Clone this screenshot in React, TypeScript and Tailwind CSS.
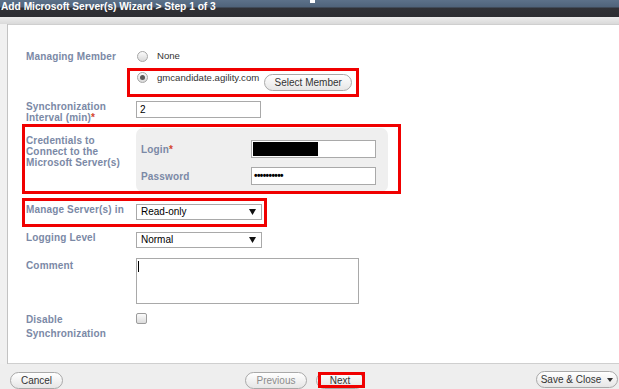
import React from 'react'

const label = "text-[10px] font-bold leading-[11px] text-[#7b89a6] tracking-[0.15px]"

function Radio({ checked }: { checked?: boolean }) {
  return (
    <span className="flex items-center justify-center w-[11px] h-[11px] rounded-full border border-[#a6a6a6] bg-[linear-gradient(to_bottom,#fbfbfb,#d9d9d9)] shrink-0">
      {checked && <span className="w-[5px] h-[5px] rounded-full bg-[#5a5a5a]" />}
    </span>
  )
}

function Pill({ children, className = '', muted }: { children: React.ReactNode; className?: string; muted?: boolean }) {
  return (
    <button
      className={`h-[17px] rounded-full border border-[#a9a9a9] bg-[linear-gradient(to_bottom,#ffffff,#e6e6e6)] text-[10px] leading-[15px] flex items-center justify-center shrink-0 ${muted ? 'text-[#8c8c8c]' : 'text-[#333]'} ${className}`}
    >
      {children}
    </button>
  )
}

function Select({ value }: { value: string }) {
  return (
    <div className="w-[126px] h-[16px] border border-[#a9a9a9] bg-white flex items-center justify-between pl-[4px] pr-[5px]">
      <span className="text-[10px] text-black leading-[14px]">{value}</span>
      <svg width="7" height="6" viewBox="0 0 7 6">
        <path d="M0 0h7L3.5 6z" fill="#111" />
      </svg>
    </div>
  )
}

function RedBox({ className }: { className: string }) {
  return <div className={`absolute border-[3px] border-[#f00000] pointer-events-none ${className}`} />
}

export default function App() {
  return (
    <div className="w-[619px] h-[389px] overflow-hidden flex flex-col bg-[#eeeeee] font-['Liberation_Sans',Arial,sans-serif]">
      {/* Title */}
      <div className="relative h-[17px] shrink-0 bg-[linear-gradient(to_bottom,#5c7189_0px,#4f637a_7px,#303136_8px,#2d2e32_17px)] text-white font-bold text-[10.2px] leading-[14px] pl-px whitespace-nowrap">
        Add Microsoft Server(s) Wizard &gt; Step 1 of 3
        <span className="absolute left-[310px] top-0 w-[5px] h-[3px] bg-white" />
      </div>
      <div className="h-[7px] shrink-0 bg-[linear-gradient(to_bottom,#ececec,#dadada)]" />

      <div className="flex flex-1 min-h-0">
        <div className="w-[8px] shrink-0 bg-[#f0f0f0] border-r border-[#c2c2c2]" />
        <div className="relative flex-1 bg-white border-t border-b border-[#cfcfcf] pl-[18px] flex flex-col">
          {/* Managing member */}
          <div className="flex items-center h-[12px] mt-[25px]">
            <div className={`${label} w-[110px]`}>Managing Member</div>
            <div className="pl-px flex items-center">
              <Radio />
              <span className="ml-[9px] text-[9.6px] text-[#333]">None</span>
            </div>
          </div>
          <div className="flex h-[19px] mt-[10px]">
            <div className="w-[110px]" />
            <div className="pl-px flex items-start">
              <Radio checked />
              <span className="ml-[9px] text-[9.6px] leading-[11px] text-[#333]">gmcandidate.agility.com</span>
              <Pill className="ml-[5px] mt-[2px] w-[88px]">Select Member</Pill>
            </div>
          </div>

          {/* Sync interval */}
          <div className="flex h-[22px] mt-[10px]">
            <div className={`${label} w-[110px]`}>
              Synchronization
              <br />
              Interval (min)<span className="text-[#d4442c]">*</span>
            </div>
            <div className="w-[125px] h-[17px] border border-[#a9a9a9] bg-white text-[10px] leading-[15px] pl-[3px] text-black">2</div>
          </div>

          {/* Credentials */}
          <div className="flex h-[64px] mt-[5px]">
            <div className={`${label} w-[110px] mt-[7px] text-[#6d80a6]`}>
              Credentials to
              <br />
              Connect to the
              <br />
              Microsoft Server(s)
            </div>
            <div className="w-[252px] h-[64px] rounded-[7px] bg-[#efefef] pl-[5px] pt-[12px] flex flex-col gap-[9px]">
              <div className="flex items-center h-[18px]">
                <div className={`${label} w-[110px]`}>
                  Login<span className="text-[#d4442c]">*</span>
                </div>
                <div className="w-[125px] h-[18px] border border-[#a9a9a9] bg-white p-[1px]">
                  <div className="w-[65px] h-[14px] bg-black" />
                </div>
              </div>
              <div className="flex items-center h-[18px]">
                <div className={`${label} w-[110px]`}>Password</div>
                <div className="w-[125px] h-[18px] border border-[#a9a9a9] bg-white pl-[2px] text-[10px] font-bold leading-[16px] text-black tracking-[-0.6px]">
                  ••••••••••
                </div>
              </div>
            </div>
          </div>

          {/* Manage servers */}
          <div className="flex h-[16px] mt-[12px]">
            <div className={`${label} w-[110px]`}>Manage Server(s) in</div>
            <Select value="Read-only" />
          </div>

          {/* Logging */}
          <div className="flex h-[16px] mt-[12px]">
            <div className={`${label} w-[110px]`}>Logging Level</div>
            <Select value="Normal" />
          </div>

          {/* Comment */}
          <div className="flex h-[46px] mt-[10px]">
            <div className={`${label} w-[110px] mt-[2px]`}>Comment</div>
            <div className="w-[223px] h-[46px] border border-[#a9a9a9] bg-white pl-[1px] pt-[2px]">
              <div className="w-px h-[11px] bg-black" />
            </div>
          </div>

          {/* Disable sync */}
          <div className="flex h-[28px] mt-[9px]">
            <div className={`${label} leading-[14px] w-[110px]`}>
              Disable
              <br />
              Synchronization
            </div>
            <span className="w-[11px] h-[11px] rounded-[2px] border border-[#9c9c9c] bg-[linear-gradient(to_bottom,#fbfbfb,#dcdcdc)]" />
          </div>

          <RedBox className="left-[119px] top-[43px] w-[232px] h-[29px]" />
          <RedBox className="left-[14px] top-[99px] w-[379px] h-[70px]" />
          <RedBox className="left-[14px] top-[173px] w-[245px] h-[29px]" />
        </div>
      </div>

      {/* Footer */}
      <div className="relative h-[25px] shrink-0 flex items-start pt-[8px] pl-[10px] pr-px">
        <Pill className="w-[53px]">Cancel</Pill>
        <Pill className="w-[62px] ml-[182px]" muted>Previous</Pill>
        <Pill className="w-[48px] ml-[9px]">Next</Pill>
        <Pill className="w-[82px] ml-auto -mt-px gap-[6px]">
          <span>Save &amp; Close</span>
          <svg width="6" height="4" viewBox="0 0 6 4">
            <path d="M0 0h6L3 4z" fill="#333" />
          </svg>
        </Pill>
        <RedBox className="left-[318px] top-[8px] w-[47px] h-[16px]" />
      </div>
    </div>
  )
}
